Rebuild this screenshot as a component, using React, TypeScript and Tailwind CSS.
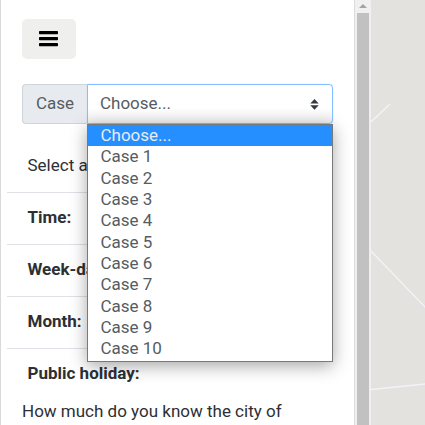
const options = ['Choose...', 'Case 1', 'Case 2', 'Case 3', 'Case 4', 'Case 5', 'Case 6', 'Case 7', 'Case 8', 'Case 9', 'Case 10'];
const fields = ['Time:', 'Week-da', 'Month:', 'Public holiday:'];

function CaseSelect() {
  return (
    <div className="relative mt-[25px] flex h-10 w-[310.5px]">
      <span className="flex w-[65px] items-center rounded-l border border-r-0 border-[#ced4da] bg-[#e7ebef] pb-[2px] pl-[13px] text-[#565c62]">Case</span>
      <button className="flex flex-1 items-center justify-between rounded-r border border-[#86bfff] bg-gradient-to-b from-white from-60% to-[#eeeeee] pr-[13px] pl-[12px] text-[#565c62] shadow-[0_0_1px_#80bdff]">
        <span className="pb-[2px]">Choose...</span>
        <svg width="9" height="11" viewBox="0 0 9 11" fill="#343a40">
          <path d="M4.5 0 8.7 4.5H.3ZM.3 6.3h8.4L4.5 10.8Z" />
        </svg>
      </button>
      <ul className="absolute top-[40px] left-[65px] z-10 h-[238px] w-[245.5px] border border-[#77797b] bg-white text-[#565c62] shadow-[0_4px_16px_rgba(0,0,0,0.35)]">
        {options.map((option, i) => (
          <li key={option} className={`h-[21.35px] pl-[12.5px] leading-[20.4px] ${i === 0 ? 'bg-[#268fff] text-[#e9ecef]' : ''}`}>{option}</li>
        ))}
      </ul>
    </div>
  );
}

export default function App() {
  return (
    <div className="flex h-[425px] w-[425px] overflow-hidden bg-white font-[Roboto,sans-serif] text-[17px] leading-6 text-[#2c3034]">
      <aside className="w-[354px] shrink-0 border-l border-[#d9d9d9] pt-[19px]">
        <div className="pl-[21px]">
          <button className="-ml-[0.5px] flex h-10 w-[54px] items-center justify-center rounded-[5px] bg-[#efefed] pr-px" aria-label="Menu">
            <svg width="19" height="16" viewBox="0 0 19 16" fill="#000">
              <rect width="19" height="3.3" rx=".7" />
              <rect y="6" width="19" height="3.3" rx=".7" />
              <rect y="12" width="19" height="3.3" rx=".7" />
            </svg>
          </button>
          <CaseSelect />
        </div>
        <div className="mt-[16px] ml-[6px] w-[300px]">
          <div className="flex h-[52px] items-center pb-[2px] pl-[20.5px] whitespace-nowrap">Select a</div>
          {fields.map((field) => (
            <div key={field} className="flex h-[52px] w-[200px] items-center border-t border-[#dee2e6] pb-[4px] pl-[20.5px] font-bold whitespace-nowrap">{field}</div>
          ))}
        </div>
        <p className="-mt-px pl-[21px] whitespace-nowrap">How much do you know the city of</p>
      </aside>
      <div className="flex w-[17px] shrink-0 flex-col items-center border-l border-[#dcdcdc] bg-[#f0f0f0]">
        <svg className="shrink-0" width="12" height="13" viewBox="0 0 12 13" fill="#a3a3a3">
          <path d="M2 8 6 4l4 4Z" />
        </svg>
        <div className="w-3 flex-1 bg-[#c1c1c1]" />
      </div>
      <svg className="shrink-0 bg-[#e3e2df]" width="54" height="425" viewBox="371 0 54 425" stroke="#f2f2fa" strokeWidth="1.5">
        <path d="M371 122 390 104M371 251 426 308M371 389.5 426 384" fill="none" />
      </svg>
    </div>
  );
}
